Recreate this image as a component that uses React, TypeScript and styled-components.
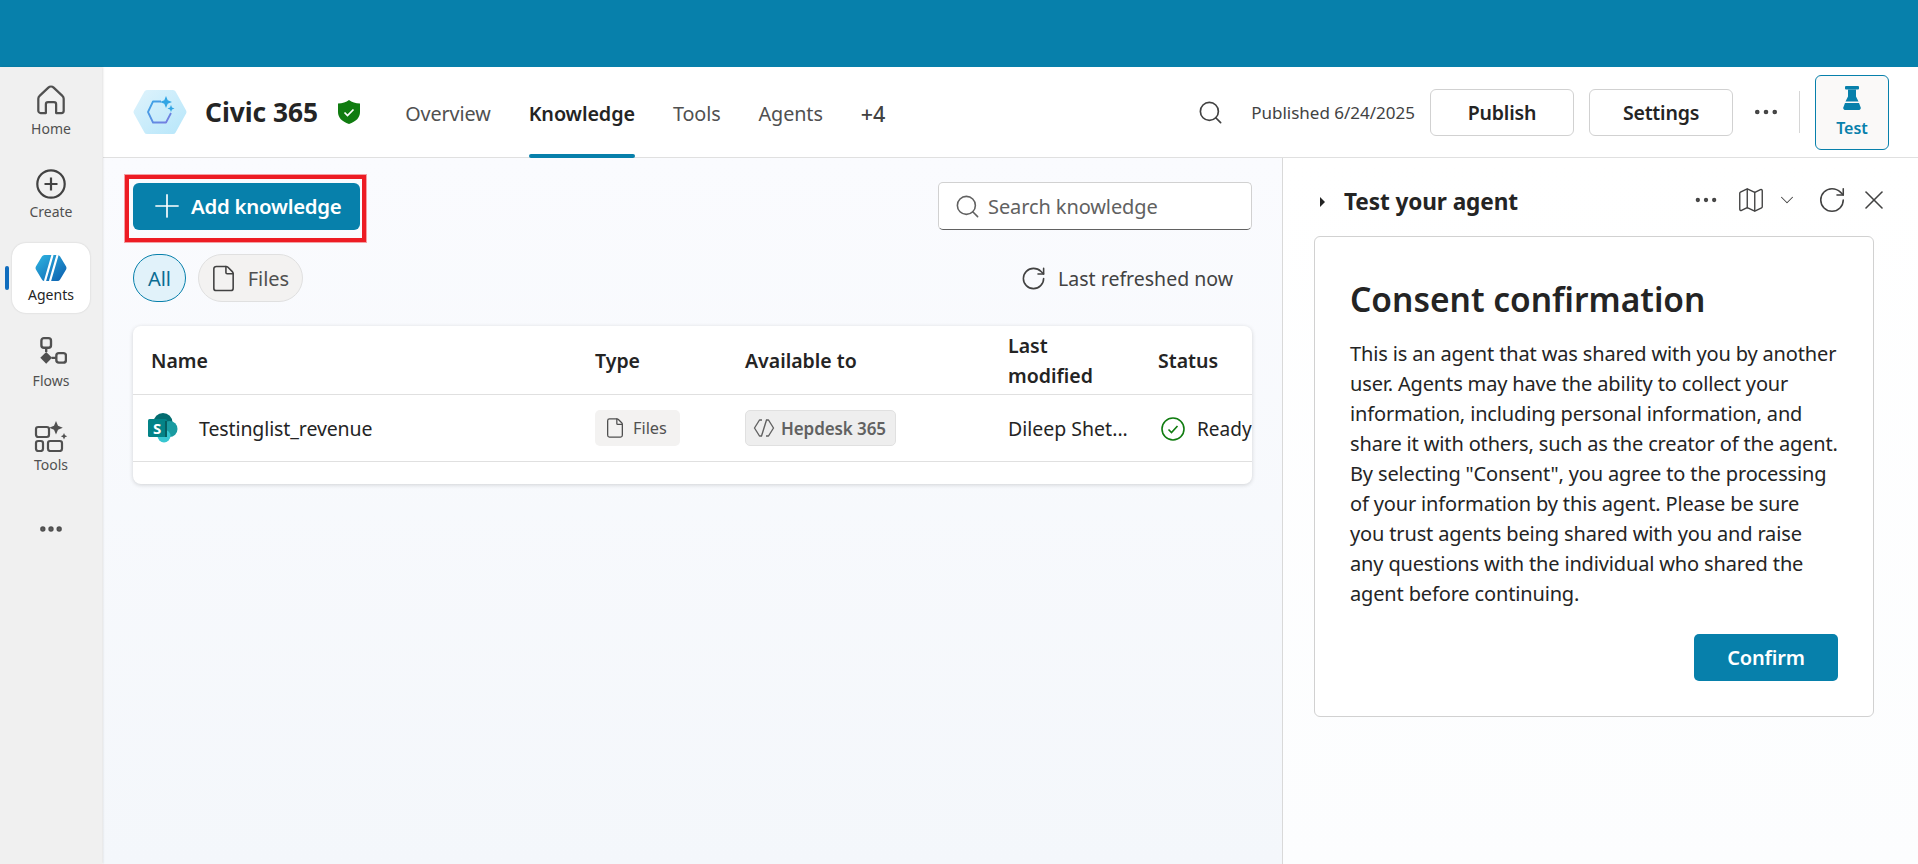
import React from "react";
import styled, { createGlobalStyle } from "styled-components";
import { ChevronDown, Ellipsis, File, Map as MapIcon, Plus, RotateCw, Search, X } from "lucide-react";

const Global = createGlobalStyle`
  html, body { margin: 0; padding: 0; height: 100%; overflow: hidden; }
  body { font-family: "Noto Sans", "Open Sans", Arial, sans-serif; color: #242424; background: #fff; }
  * { box-sizing: border-box; }
`;

const Page = styled.div`
  width: 1918px;
  height: 864px;
  display: flex;
  flex-direction: column;
  overflow: hidden;
`;
const TopBar = styled.div`
  height: 67px;
  flex: none;
  background: #0780ab;
`;
const Body = styled.div`
  flex: 1;
  display: flex;
  min-height: 0;
`;
const Sidebar = styled.nav`
  width: 102px;
  flex: none;
  background: #f0f0f0;
  box-shadow: 1px 0 2px rgba(0, 0, 0, 0.12);
  display: flex;
  flex-direction: column;
  align-items: center;
  gap: 14px;
  padding-top: 8px;
  position: relative;
  z-index: 2;
`;
const NavItem = styled.div<{ $active?: boolean; $plain?: boolean }>`
  position: relative;
  width: 78px;
  height: 70px;
  display: flex;
  flex-direction: column;
  align-items: center;
  justify-content: center;
  gap: 4px;
  padding: ${(p) => (p.$plain ? "0 0 2px" : "2px 0 0")};
  border-radius: 14px;
  font-size: 14px;
  line-height: 18px;
  color: ${(p) => (p.$active ? "#242424" : "#505050")};
  background: ${(p) => (p.$active ? "#fff" : "transparent")};
  box-shadow: ${(p) => (p.$active ? "0 0 2px rgba(0,0,0,.16)" : "none")};
  svg { flex: none; }
`;
const NavIndicator = styled.span`
  position: absolute;
  left: -7px;
  top: 23px;
  width: 4px;
  height: 24px;
  border-radius: 2px;
  background: #0f6cbd;
`;
const Workspace = styled.div`
  flex: 1;
  min-width: 0;
  display: flex;
  flex-direction: column;
  margin-left: 1px;
`;
const Header = styled.header`
  height: 91px;
  flex: none;
  display: flex;
  align-items: center;
  padding: 0 29px 0 30px;
  background: #fff;
  border-bottom: 1px solid #e0e0e0;
  position: relative;
`;
const AgentTitle = styled.h1`
  margin: 0 0 0 18px;
  font-size: 26.3px;
  line-height: 36px;
  font-weight: 700;
  color: #242424;
  white-space: nowrap;
`;
const ShieldWrap = styled.span`
  display: flex;
  margin-left: 20px;
`;
const Tabs = styled.div`
  display: flex;
  align-self: stretch;
  gap: 38px;
  margin-left: 45px;
`;
const Tab = styled.div<{ $active?: boolean; $strong?: boolean }>`
  position: relative;
  display: flex;
  align-items: center;
  padding-top: 3px;
  font-size: ${(p) => (p.$strong ? "21.5px" : "19.8px")};
  letter-spacing: -0.1px;
  font-weight: ${(p) => (p.$active ? 600 : p.$strong ? 500 : 400)};
  color: ${(p) => (p.$active ? "#242424" : p.$strong ? "#424242" : "#505050")};
  &::after {
    content: "";
    display: ${(p) => (p.$active ? "block" : "none")};
    position: absolute;
    left: 0;
    right: 0;
    bottom: -1px;
    height: 4px;
    border-radius: 2px;
    background: #0780ab;
  }
`;
const HeaderActions = styled.div`
  margin-left: auto;
  display: flex;
  align-items: center;
`;
const PublishedText = styled.span`
  margin-left: 27px;
  font-size: 17px;
  color: #424242;
  white-space: nowrap;
`;
const OutlineButton = styled.button`
  width: 144px;
  height: 47px;
  margin-left: 15px;
  border: 1px solid #d1d1d1;
  border-radius: 6px;
  background: #fff;
  font: 600 19.5px "Noto Sans", sans-serif;
  letter-spacing: -0.2px;
  color: #242424;
`;
const MoreWrap = styled.span`
  display: flex;
  color: #424242;
  margin-left: 18px;
`;
const Divider = styled.span`
  width: 1px;
  height: 42px;
  background: #d6d6d6;
  margin: 0 15px 0 18px;
`;
const TestButton = styled.button`
  width: 74px;
  height: 75px;
  padding: 10px 0 0;
  display: flex;
  flex-direction: column;
  align-items: center;
  gap: 8px;
  border: 1px solid #0780ab;
  border-radius: 6px;
  background: #faf9f8;
  font: 600 16px/20px "Noto Sans", sans-serif;
  color: #0780ab;
`;
const Content = styled.div`
  flex: 1;
  min-height: 0;
  display: flex;
`;
const Main = styled.main`
  width: 1180px;
  flex: none;
  padding: 24px 30px 0;
  background: linear-gradient(180deg, #fafbfe 0%, #f4f7fb 100%);
  border-right: 1px solid #d9d9d9;
`;
const Toolbar = styled.div`
  display: flex;
  align-items: center;
  justify-content: space-between;
  height: 48px;
`;
const AddButton = styled.button`
  position: relative;
  width: 227px;
  height: 47px;
  display: flex;
  align-items: center;
  gap: 5px;
  padding: 0 0 0 15px;
  border: 0;
  border-radius: 6px;
  background: #0780ab;
  color: #fff;
  font: 600 20.4px "Noto Sans", sans-serif;
  letter-spacing: -0.25px;
  white-space: nowrap;
`;
const RedFrame = styled.span`
  position: absolute;
  left: -9px;
  right: -7px;
  top: -9px;
  bottom: -13px;
  border: 5px solid #ed1c24;
  outline: 1px solid #f4a0a4;
  outline-offset: -1px;
  pointer-events: none;
`;
const SearchBox = styled.div`
  width: 314px;
  height: 48px;
  display: flex;
  align-items: center;
  gap: 7px;
  padding-left: 15px;
  background: #fff;
  border: 1px solid #d1d1d1;
  border-bottom-color: #616161;
  border-radius: 5px;
  color: #616161;
  font-size: 20px;
  letter-spacing: -0.1px;
`;
const FilterRow = styled.div`
  display: flex;
  align-items: center;
  gap: 12px;
  height: 48px;
  margin-top: 24px;
`;
const FilterPill = styled.div<{ $active?: boolean }>`
  height: 48px;
  display: flex;
  align-items: center;
  gap: 10px;
  padding: ${(p) => (p.$active ? "0 14px" : "0 13px 0 10px")};
  border-radius: 24px;
  font-size: 20px;
  letter-spacing: -0.1px;
  color: ${(p) => (p.$active ? "#0a6c92" : "#505050")};
  background: ${(p) => (p.$active ? "#e1f2fa" : "#f3f2f1")};
  border: 1px solid ${(p) => (p.$active ? "#0780ab" : "#e0e0e0")};
`;
const Refreshed = styled.div`
  margin-left: auto;
  margin-right: 19px;
  display: flex;
  align-items: center;
  gap: 11px;
  font-size: 19.5px;
  color: #424242;
`;
const TableCard = styled.section`
  margin-top: 24px;
  height: 158px;
  background: #fff;
  border-radius: 8px;
  box-shadow: 0 1px 4px rgba(0, 0, 0, 0.16);
  overflow: hidden;
`;
const TableRow = styled.div<{ $head?: boolean }>`
  display: grid;
  grid-template-columns: 444px 150px 263px 150px 1fr;
  align-items: center;
  height: ${(p) => (p.$head ? "69px" : "67px")};
  padding: ${(p) => (p.$head ? "2px" : "0")} 0 0 18px;
  border-bottom: 1px solid #e0e0e0;
  font-size: 18px;
  color: #242424;
  font-weight: ${(p) => (p.$head ? 600 : 400)};
`;
const HeadCell = styled.div`
  line-height: 30px;
  font-size: 19.5px;
`;
const NameCell = styled.div`
  display: flex;
  align-items: center;
  gap: 21px;
  margin-left: -3px;
  font-size: 19.5px;
  letter-spacing: -0.1px;
`;
const TypeBadge = styled.span`
  width: 85px;
  height: 36px;
  display: inline-flex;
  align-items: center;
  gap: 7px;
  padding-left: 9px;
  border-radius: 5px;
  background: #f3f2f1;
  color: #505050;
  font-size: 16.3px;
`;
const AgentBadge = styled.span`
  width: 151px;
  height: 36px;
  display: inline-flex;
  align-items: center;
  gap: 6px;
  padding-left: 7px;
  border-radius: 5px;
  background: #eeeeee;
  border: 1px solid #e0e0e0;
  color: #616161;
  font-size: 17px;
  font-weight: 600;
  letter-spacing: -0.1px;
  white-space: nowrap;
`;
const ModifiedCell = styled.div`
  padding-top: 1px;
  font-size: 19.5px;
  white-space: nowrap;
`;
const StatusCell = styled.div`
  display: flex;
  align-items: center;
  gap: 12px;
  padding: 1px 0 0 3px;
  font-size: 19px;
  white-space: nowrap;
`;
const TestPanel = styled.aside`
  flex: 1;
  min-width: 0;
  padding: 0 43px 0 31px;
  background: linear-gradient(180deg, #ffffff 0%, #fcfdfe 100%);
`;
const PanelHead = styled.div`
  height: 78px;
  display: flex;
  align-items: center;
  color: #424242;
  padding-top: 9px;
`;
const PanelTitle = styled.h2`
  margin: 0 0 0 19px;
  font-size: 22.6px;
  font-weight: 700;
  letter-spacing: -0.1px;
  color: #242424;
  white-space: nowrap;
`;
const PanelTools = styled.div`
  margin-left: auto;
  display: flex;
  align-items: center;
  margin-right: -15px;
  margin-bottom: 3px;
`;
const ToolIcon = styled.span<{ $gap?: number }>`
  display: flex;
  margin-left: ${(p) => p.$gap ?? 0}px;
`;
const Caret = styled.span`
  width: 0;
  height: 0;
  margin-left: 6px;
  border-left: 5px solid #242424;
  border-top: 5px solid transparent;
  border-bottom: 5px solid transparent;
`;
const ConsentCard = styled.section`
  width: 560px;
  height: 481px;
  padding: 38px 35px 0;
  border: 1px solid #d1d1d1;
  border-radius: 6px;
  background: #fff;
`;
const ConsentTitle = styled.h3`
  margin: 0;
  font-size: 33.5px;
  line-height: 48px;
  font-weight: 600;
  color: #242424;
  white-space: nowrap;
`;
const ConsentText = styled.p`
  margin: 16px 0 0;
  font-size: 20px;
  line-height: 30px;
  letter-spacing: -0.15px;
  color: #242424;
  white-space: nowrap;
`;
const ConsentActions = styled.div`
  display: flex;
  justify-content: flex-end;
  margin-top: 25px;
`;
const ConfirmButton = styled.button`
  width: 144px;
  height: 47px;
  border: 0;
  border-radius: 5px;
  background: #0780ab;
  color: #fff;
  font: 600 20px "Noto Sans", sans-serif;
  letter-spacing: -0.2px;
`;

const I = "#505050";
const HomeIcon = () => (
  <svg width="32" height="32" viewBox="0 0 30 30" fill="none" stroke={I} strokeWidth="2.1" strokeLinejoin="round">
    <path d="M12.5 3.4a3.6 3.6 0 0 1 5 0l8.2 7.7c.8.7 1.2 1.6 1.2 2.7V25a2.2 2.2 0 0 1-2.2 2.2h-4.9V19a2 2 0 0 0-2-2h-5.6a2 2 0 0 0-2 2v8.2H5.3A2.2 2.2 0 0 1 3.1 25V13.8c0-1.1.4-2 1.2-2.7z" />
  </svg>
);
const CreateIcon = () => (
  <svg width="30" height="30" viewBox="0 0 30 30" fill="none" stroke="#424242" strokeWidth="2.2">
    <circle cx="15" cy="15" r="13.7" />
    <path d="M15 8.5v13M8.5 15h13" />
  </svg>
);
const AgentsLogo = () => (
  <svg width="32" height="28" viewBox="0 0 32 28">
    <defs>
      <linearGradient id="ag" x1="0" y1="0" x2="1" y2="1">
        <stop offset="0" stopColor="#2fb6e2" />
        <stop offset="1" stopColor="#0b5cad" />
      </linearGradient>
    </defs>
    <path d="M9.5 1h13a3 3 0 0 1 2.6 1.5l6 10a3 3 0 0 1 0 3l-6 10a3 3 0 0 1-2.6 1.5h-13a3 3 0 0 1-2.6-1.5l-6-10a3 3 0 0 1 0-3l6-10A3 3 0 0 1 9.5 1z" fill="url(#ag)" />
    <path d="M17.5 1 10 27M22.5 1 15 27" stroke="#fff" strokeWidth="2.2" />
  </svg>
);
const FlowsIcon = () => (
  <svg width="32" height="32" viewBox="0 0 30 30" fill="none" stroke={I} strokeWidth="2.2">
    <rect x="6" y="2" width="9" height="9" rx="2.4" />
    <rect x="20" y="16" width="9" height="9" rx="2.4" />
    <path d="M10.5 11v4M15.5 20.5H20" />
    <path d="M10.5 15 16 20.5 10.5 26 5 20.5z" fill={I} stroke="none" />
  </svg>
);
const ToolsIcon = () => (
  <svg width="34" height="32" viewBox="0 0 34 32" fill="none" stroke={I} strokeWidth="2.2">
    <rect x="2" y="7" width="13" height="10" rx="2.2" />
    <rect x="2" y="21" width="7" height="10" rx="2.2" />
    <rect x="14" y="21" width="14" height="10" rx="2.2" />
    <path d="M22 1l2 4.8 4.8 2-4.8 2-2 4.8-2-4.8-4.8-2 4.8-2zM30 13l1 2.2 2.2 1-2.2 1-1 2.2-1-2.2-2.2-1 2.2-1z" fill={I} stroke="none" />
  </svg>
);
const AgentAvatar = () => (
  <svg width="54" height="46" viewBox="0 0 54 46" style={{ flex: "none" }}>
    <defs>
      <linearGradient id="hx" x1="0" y1="0" x2="1" y2="1">
        <stop offset="0" stopColor="#dff3fc" />
        <stop offset="1" stopColor="#b6e6fa" />
      </linearGradient>
      <linearGradient id="hs" x1="0" y1="0" x2="1" y2="1">
        <stop offset="0" stopColor="#3aa6e6" />
        <stop offset="1" stopColor="#7a7ae0" />
      </linearGradient>
    </defs>
    <path d="M14 1h26a3 3 0 0 1 2.6 1.5l10.5 19a3 3 0 0 1 0 3L42.6 43.5A3 3 0 0 1 40 45H14a3 3 0 0 1-2.6-1.5L.9 24.5a3 3 0 0 1 0-3l10.5-19A3 3 0 0 1 14 1z" fill="url(#hx)" />
    <path d="M28 12.5h-8L15 23l5 10.5h13l5-9.5" fill="none" stroke="url(#hs)" strokeWidth="1.8" strokeLinejoin="round" />
    <path d="M33 7l1.7 4.3 4.3 1.7-4.3 1.7L33 19l-1.7-4.3L27 13l4.3-1.7zM38 16l1 2.5 2.5 1-2.5 1-1 2.5-1-2.5-2.5-1 2.5-1z" fill="#31a5e4" />
  </svg>
);
const Shield = () => (
  <svg width="22" height="24" viewBox="0 0 22 24">
    <path d="M11 0c2.8 2.2 6.5 3.3 11 3.5V12c0 5.5-3.7 9.5-11 12C3.7 21.5 0 17.5 0 12V3.5C4.5 3.3 8.2 2.2 11 0z" fill="#107c10" />
    <path d="M6.5 12.5l3 3 6-6" fill="none" stroke="#fff" strokeWidth="1.7" />
  </svg>
);
const Flask = () => (
  <svg width="20" height="24" viewBox="0 0 20 24" fill="#0780ab">
    <rect x="3" y="0" width="14" height="3.5" rx="1" />
    <path d="M6 3.5h8v7l2.5 5h-13L6 10.5z" />
    <path d="M3 17h14l1.5 4a2 2 0 0 1-1.9 3H3.4a2 2 0 0 1-1.9-3z" />
  </svg>
);
const SharePoint = () => (
  <svg width="30" height="30" viewBox="0 0 30 30" style={{ flex: "none" }}>
    <circle cx="15" cy="9.5" r="9.5" fill="#036c70" />
    <circle cx="21.5" cy="16" r="8" fill="#1a9ba1" />
    <circle cx="16" cy="23" r="6.5" fill="#37c6d0" />
    <rect x="0" y="6" width="19" height="18" rx="1.5" fill="#038387" />
    <rect x="17" y="8" width="2" height="16" fill="#055e61" />
    <text x="5" y="20.5" fontFamily="Noto Sans, sans-serif" fontWeight="700" fontSize="15" fill="#fff">S</text>
  </svg>
);
const CodeHex = () => (
  <svg width="22" height="22" viewBox="0 0 22 22" fill="none" stroke="#616161" strokeWidth="1.4" strokeLinejoin="round" style={{ flex: "none" }}>
    <path d="M9 3H6.5L1.5 11l5 8H9M13 3h2.5l5 8-5 8H13M13.5 3 8.5 19" />
  </svg>
);
const ReadyIcon = () => (
  <svg width="24" height="24" viewBox="0 0 24 24" fill="none" stroke="#107c10" strokeWidth="1.6" style={{ flex: "none" }}>
    <circle cx="12" cy="12" r="11" />
    <path d="M7.5 12.5l3 3 6-6.5" />
  </svg>
);

const rows = [
  "This is an agent that was shared with you by another",
  "user. Agents may have the ability to collect your",
  "information, including personal information, and",
  "share it with others, such as the creator of the agent.",
  'By selecting "Consent", you agree to the processing',
  "of your information by this agent. Please be sure",
  "you trust agents being shared with you and raise",
  "any questions with the individual who shared the",
  "agent before continuing.",
];

export default function App() {
  return (
    <Page>
      <Global />
      <TopBar />
      <Body>
        <Sidebar>
          <NavItem><HomeIcon />Home</NavItem>
          <NavItem><CreateIcon />Create</NavItem>
          <NavItem $active><NavIndicator /><AgentsLogo />Agents</NavItem>
          <NavItem><FlowsIcon />Flows</NavItem>
          <NavItem><ToolsIcon />Tools</NavItem>
          <NavItem $plain><Ellipsis size={28} strokeWidth={2.6} color="#505050" /></NavItem>
        </Sidebar>
        <Workspace>
          <Header>
            <AgentAvatar />
            <AgentTitle>Civic 365</AgentTitle>
            <ShieldWrap><Shield /></ShieldWrap>
            <Tabs>
              <Tab>Overview</Tab>
              <Tab $active>Knowledge</Tab>
              <Tab>Tools</Tab>
              <Tab>Agents</Tab>
              <Tab $strong>+4</Tab>
            </Tabs>
            <HeaderActions>
              <Search size={27} strokeWidth={1.5} color="#424242" />
              <PublishedText>Published 6/24/2025</PublishedText>
              <OutlineButton>Publish</OutlineButton>
              <OutlineButton>Settings</OutlineButton>
              <MoreWrap><Ellipsis size={30} strokeWidth={1.7} /></MoreWrap>
              <Divider />
              <TestButton><Flask />Test</TestButton>
            </HeaderActions>
          </Header>
          <Content>
            <Main>
              <Toolbar>
                <AddButton>
                  <Plus size={38} strokeWidth={1.05} />
                  Add knowledge
                  <RedFrame />
                </AddButton>
                <SearchBox>
                  <Search size={27} strokeWidth={1.4} color="#616161" />
                  Search knowledge
                </SearchBox>
              </Toolbar>
              <FilterRow>
                <FilterPill $active>All</FilterPill>
                <FilterPill><File size={29} strokeWidth={1.3} color="#424242" />Files</FilterPill>
                <Refreshed><RotateCw size={27} strokeWidth={1.4} />Last refreshed now</Refreshed>
              </FilterRow>
              <TableCard>
                <TableRow $head>
                  <HeadCell>Name</HeadCell>
                  <HeadCell>Type</HeadCell>
                  <HeadCell>Available to</HeadCell>
                  <HeadCell>Last<br />modified</HeadCell>
                  <HeadCell>Status</HeadCell>
                </TableRow>
                <TableRow>
                  <NameCell><SharePoint />Testinglist_revenue</NameCell>
                  <div><TypeBadge><File size={22} strokeWidth={1.4} color="#505050" />Files</TypeBadge></div>
                  <div><AgentBadge><CodeHex />Hepdesk 365</AgentBadge></div>
                  <ModifiedCell>Dileep Shet...</ModifiedCell>
                  <StatusCell><ReadyIcon />Ready</StatusCell>
                </TableRow>
              </TableCard>
            </Main>
            <TestPanel>
              <PanelHead>
                <Caret />
                <PanelTitle>Test your agent</PanelTitle>
                <PanelTools>
                  <ToolIcon><Ellipsis size={28} strokeWidth={1.7} /></ToolIcon>
                  <ToolIcon $gap={16}><MapIcon size={30} strokeWidth={1.1} /></ToolIcon>
                  <ToolIcon $gap={10}><ChevronDown size={22} strokeWidth={1.1} /></ToolIcon>
                  <ToolIcon $gap={19}><RotateCw size={30} strokeWidth={1.25} /></ToolIcon>
                  <ToolIcon $gap={11}><X size={32} strokeWidth={1.2} /></ToolIcon>
                </PanelTools>
              </PanelHead>
              <ConsentCard>
                <ConsentTitle>Consent confirmation</ConsentTitle>
                <ConsentText>
                  {rows.map((r) => (
                    <React.Fragment key={r}>{r}<br /></React.Fragment>
                  ))}
                </ConsentText>
                <ConsentActions><ConfirmButton>Confirm</ConfirmButton></ConsentActions>
              </ConsentCard>
            </TestPanel>
          </Content>
        </Workspace>
      </Body>
    </Page>
  );
}
